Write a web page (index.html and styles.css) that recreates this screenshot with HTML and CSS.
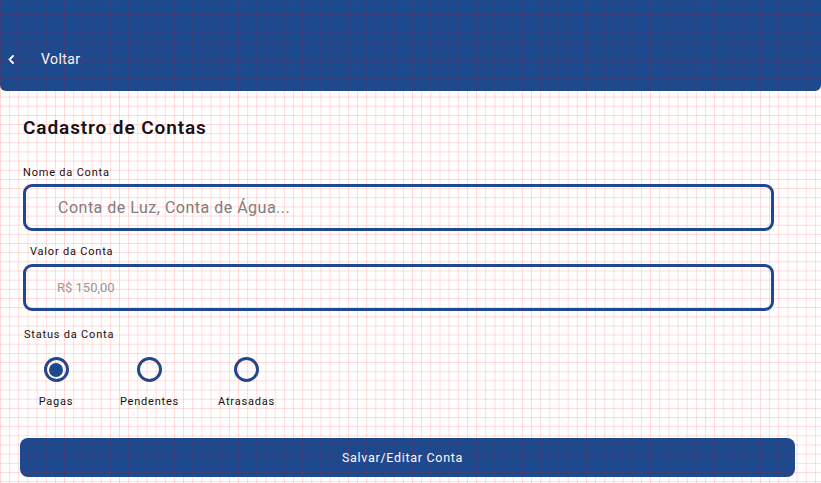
FILE: index.html
```html
<!DOCTYPE html>
<html lang="pt-BR">
<head>
<meta charset="utf-8">
<title>Cadastro de Contas</title>
<link rel="stylesheet" href="styles.css">
</head>
<body>
<header class="topbar">
  <svg class="back-icon" width="6" height="9" viewBox="0 0 6 9" aria-hidden="true"><polyline points="5,1 1.5,4.5 5,8" fill="none" stroke="#fff" stroke-width="1.8" stroke-linecap="round" stroke-linejoin="round"/></svg>
  <span class="back-text">Voltar</span>
</header>
<main class="form">
  <h1 class="title">Cadastro de Contas</h1>
  <label class="label label-nome">Nome da Conta</label>
  <input class="field field-nome" type="text" placeholder="Conta de Luz, Conta de Água...">
  <label class="label label-valor">Valor da Conta</label>
  <input class="field field-valor" type="text" placeholder="R$ 150,00">
  <div class="label label-status">Status da Conta</div>
  <div class="radios">
    <div class="radio-item"><span class="radio checked"></span><span class="radio-label">Pagas</span></div>
    <div class="radio-item"><span class="radio"></span><span class="radio-label">Pendentes</span></div>
    <div class="radio-item"><span class="radio"></span><span class="radio-label">Atrasadas</span></div>
  </div>
</main>
<div class="actions">
  <button class="save-btn" type="button">Salvar/Editar Conta</button>
</div>
<div class="grid-overlay"></div>
</body>
</html>
```

FILE: styles.css
```css
html, body {
  margin: 0;
  padding: 0;
  background: #ffffff;
}
body {
  font-family: Roboto, "Noto Sans", sans-serif;
  color: #111111;
  height: 483px;
  overflow: hidden;
}
.topbar {
  box-sizing: border-box;
  height: 91px;
  background: #1b4a8f;
  border-radius: 0 0 6px 6px;
  display: flex;
  align-items: flex-start;
  padding: 50px 0 0 8px;
}
.back-icon {
  margin-top: 5px;
  display: block;
}
.back-text {
  margin-left: 27px;
  color: #ffffff;
  font-size: 14px;
  line-height: 18px;
  font-weight: 400;
  letter-spacing: 0.4px;
}
.form {
  display: flex;
  flex-direction: column;
  padding: 0 47px 0 23px;
}
.title {
  margin: 26px 0 0 0;
  font-size: 19px;
  line-height: 22px;
  font-weight: 600;
  letter-spacing: 0.9px;
  color: #111111;
}
.label {
  font-size: 11px;
  line-height: 14px;
  letter-spacing: 0.8px;
  color: #111111;
  display: block;
}
.label-nome {
  margin-top: 27px;
}
.label-valor {
  margin-top: 14px;
  padding-left: 7px;
}
.label-status {
  margin-top: 17px;
  padding-left: 1px;
}
.field {
  box-sizing: border-box;
  width: 100%;
  height: 47px;
  border: 3px solid #1b4a8f;
  border-radius: 9px;
  background: transparent;
  font-family: Roboto, "Noto Sans", sans-serif;
  outline: none;
  margin: 0;
}
.field-nome {
  margin-top: 4px;
  padding-left: 32px;
  font-size: 16px;
  letter-spacing: 0.5px;
}
.field-nome::placeholder {
  color: #808080;
}
.field-valor {
  margin-top: 5px;
  padding-left: 31px;
  font-size: 13px;
}
.field-valor::placeholder {
  color: #9a9a9a;
}
.radios {
  display: grid;
  grid-template-columns: 66px 121px 73px;
  margin-top: 15px;
}
.radio-item {
  display: flex;
  flex-direction: column;
  align-items: center;
}
.radio {
  box-sizing: border-box;
  width: 25px;
  height: 25px;
  border: 3px solid #1b4a8f;
  border-radius: 50%;
  display: flex;
  align-items: center;
  justify-content: center;
}
.radio.checked::after {
  content: "";
  width: 14px;
  height: 14px;
  border-radius: 50%;
  background: #1b4a8f;
}
.radio-label {
  margin-top: 13px;
  font-size: 11px;
  line-height: 14px;
  letter-spacing: 0.8px;
  color: #111111;
  white-space: nowrap;
}
.actions {
  padding: 0 26px 0 20px;
  margin-top: 29px;
}
.save-btn {
  display: block;
  width: 100%;
  height: 39px;
  border: none;
  border-radius: 8px;
  background: #1b4a8f;
  color: #ffffff;
  font-family: Roboto, "Noto Sans", sans-serif;
  font-size: 12.5px;
  font-weight: 400;
  letter-spacing: 0.7px;
  padding: 0 10px 0 0;
}
.grid-overlay {
  position: fixed;
  inset: 0;
  pointer-events: none;
  background-image:
    linear-gradient(to right, rgba(255, 0, 0, 0.15) 1px, transparent 1px),
    linear-gradient(to bottom, rgba(255, 0, 0, 0.15) 1px, transparent 1px);
  background-size: 9.17px 9.17px;
  background-position: 0 5px;
}
```
